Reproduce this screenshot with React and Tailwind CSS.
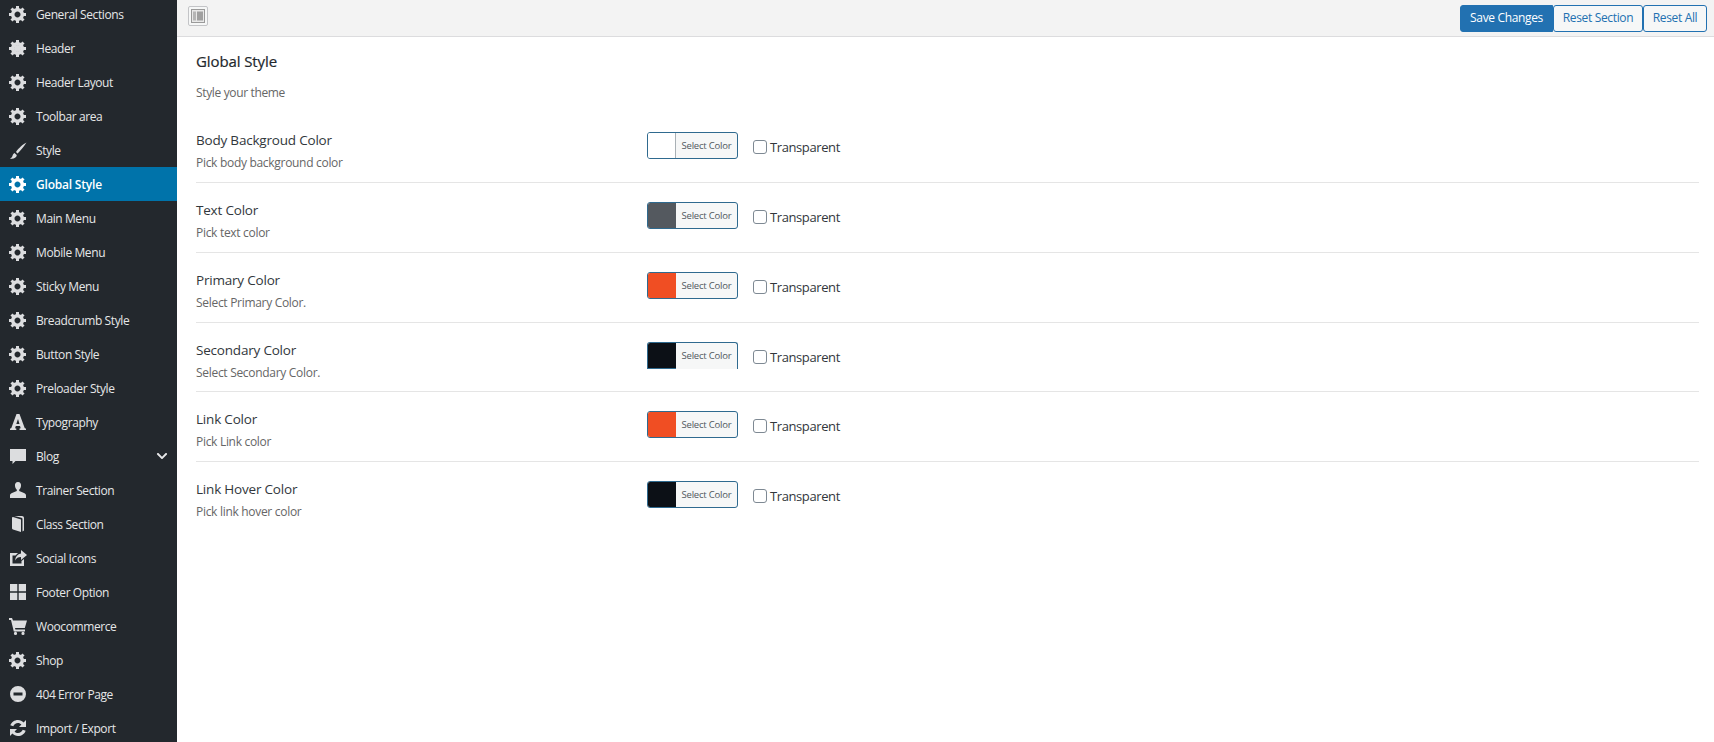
import React from 'react';
import { FaChevronDown } from 'react-icons/fa';

const Gear = ({ solid }) => (
  <svg viewBox="0 0 20 20" className="w-5 h-5 fill-current">
    <path d="M18 12h-2.18c-.17.7-.44 1.35-.81 1.93l1.54 1.54-2.1 2.1-1.54-1.54c-.58.36-1.23.63-1.91.79V19H8v-2.18c-.68-.16-1.33-.43-1.91-.79l-1.54 1.54-2.12-2.12 1.54-1.54c-.36-.58-.63-1.23-.79-1.91H1V9.03h2.17c.16-.7.44-1.35.8-1.94L2.43 5.55l2.1-2.1 1.54 1.54c.58-.37 1.24-.64 1.93-.81V2h3v2.18c.68.16 1.33.43 1.91.79l1.54-1.54 2.12 2.12-1.54 1.54c.36.59.64 1.24.8 1.94H18V12zm-8.5 1.5c1.66 0 3-1.34 3-3s-1.34-3-3-3-3 1.34-3 3 1.34 3 3 3z" />
    {solid && <circle cx="9.5" cy="10.5" r="3.5" />}
  </svg>
);

const Icon = ({ d }) => (
  <svg viewBox="0 0 20 20" className="w-5 h-5 fill-current">
    <path fillRule="evenodd" d={d} />
  </svg>
);

const icons = {
  brush: 'M18.5 2.5c-3 1.5-8 5.5-10.500 9.500l1.500 1.500c3.500-3 7.500-8.500 9-11zM6.500 13c-1.500 1-2 2.500-2.500 4L2 19c2.500-.2 5-.8 6.200-2.300.5-.7.6-1.200.5-1.700z',
  type: 'M8.500 2h3l5 13.500c.2.600.6.900 1.500 1V18h-6.500v-1.500c1 0 1.200-.3 1-1l-.5-1.500H7.800l-.5 1.500c-.2.700 0 1 1 1V18H2v-1.500c.9-.1 1.300-.4 1.500-1zM8.300 12h3.200L10 7z',
  chat: 'M2 3h16v12H7.500l-3 3v-3H2z',
  user: 'M10 2c2.300 0 3.300 1.800 3 4-.2 1.700-1 3-1.800 3.800V11l4.800 2c1.300.5 2 1.500 2 2.500V18H2v-2.500c0-1 .7-2 2-2.500l4.800-2V9.800C8 9 7.200 7.700 7 6c-.3-2.200.7-4 3-4z',
  book: 'M5 3l8 2.500V18l-8-2.500c-.6-.2-1-.7-1-1.300V4c0-.7.4-1.200 1-1zM6.500 2H14c1 0 2 .8 2 2v12.500l-1.500 1V5c0-.6-.3-1-1-1.300z',
  share: 'M2 5h8L7.500 7.500h-3v8h9V13l2.500-2v7H2zM13 2l6 5-6 5V9c-3 0-4.500 1-6 3.500.5-4 2.500-6.500 6-7z',
  grid: 'M2 2h7.300v7.300H2zM10.700 2H18v7.300h-7.300zM2 10.700h7.300V18H2zM10.700 10.700H18V18h-7.300z',
  cart: 'M1 2h3l1 2.500h14L16.800 12H7l.4 1.500H17v2H5.800L3 4H1zM7.500 15.800a1.600 1.600 0 1 1 0 3.200 1.600 1.600 0 0 1 0-3.200zM15 15.800a1.600 1.600 0 1 1 0 3.200 1.600 1.600 0 0 1 0-3.200z',
  minus: 'M10 2a8 8 0 1 1 0 16 8 8 0 0 1 0-16zM5.500 8.500v3h9v-3z',
  update: 'M10 2c2.200 0 4.200.9 5.600 2.400L18 2v7h-7l2.400-2.400C12.500 5.600 11.300 5 10 5 7.800 5 6 6.300 5.300 8.200l-3-.9C3.400 4.200 6.400 2 10 2zM2 11h7l-2.400 2.400c.9 1 2.100 1.600 3.400 1.600 2.200 0 4-1.300 4.700-3.200l3 .9C16.600 15.800 13.600 18 10 18c-2.200 0-4.200-.9-5.600-2.400L2 18z',
};

const menu = [
  { label: 'General Sections', icon: <Gear /> },
  { label: 'Header', icon: <Gear solid /> },
  { label: 'Header Layout', icon: <Gear /> },
  { label: 'Toolbar area', icon: <Gear /> },
  { label: 'Style', icon: <Icon d={icons.brush} /> },
  { label: 'Global Style', icon: <Gear />, active: true },
  { label: 'Main Menu', icon: <Gear /> },
  { label: 'Mobile Menu', icon: <Gear /> },
  { label: 'Sticky Menu', icon: <Gear /> },
  { label: 'Breadcrumb Style', icon: <Gear /> },
  { label: 'Button Style', icon: <Gear /> },
  { label: 'Preloader Style', icon: <Gear /> },
  { label: 'Typography', icon: <Icon d={icons.type} /> },
  { label: 'Blog', icon: <Icon d={icons.chat} />, arrow: true },
  { label: 'Trainer Section', icon: <Icon d={icons.user} /> },
  { label: 'Class Section', icon: <Icon d={icons.book} /> },
  { label: 'Social Icons', icon: <Icon d={icons.share} /> },
  { label: 'Footer Option', icon: <Icon d={icons.grid} /> },
  { label: 'Woocommerce', icon: <Icon d={icons.cart} /> },
  { label: 'Shop', icon: <Gear /> },
  { label: '404 Error Page', icon: <Icon d={icons.minus} /> },
  { label: 'Import / Export', icon: <Icon d={icons.update} /> },
];

const rows = [
  { title: 'Body Backgroud Color', desc: 'Pick body background color', color: '#ffffff' },
  { title: 'Text Color', desc: 'Pick text color', color: '#54595f' },
  { title: 'Primary Color', desc: 'Select Primary Color.', color: '#f04e23' },
  { title: 'Secondary Color', desc: 'Select Secondary Color.', color: '#0c1016', clipped: true },
  { title: 'Link Color', desc: 'Pick Link color', color: '#f04e23' },
  { title: 'Link Hover Color', desc: 'Pick link hover color', color: '#0c1016' },
];

const Sidebar = () => (
  <aside className="w-[177px] shrink-0 h-full overflow-hidden bg-[#23282d]">
    <ul className="-mt-[3px]">
      {menu.map((item) => (
        <li
          key={item.label}
          className={`h-[34px] flex items-center pl-[8px] pr-[8px] text-[12px] ${
            item.active ? 'bg-[#0073aa] text-white font-semibold tracking-[-0.2px]' : 'text-[#e6e7e8] tracking-[-0.4px]'
          }`}
        >
          <span className={`w-[28px] shrink-0 -mt-[1px] ${item.active ? 'text-white' : 'text-[#dcdddf]'}`}>{item.icon}</span>
          <span className="flex-1 whitespace-nowrap mt-[2px]">{item.label}</span>
          {item.arrow && <FaChevronDown className="text-[12px] text-[#e6e7e8] mr-[1px]" />}
        </li>
      ))}
    </ul>
  </aside>
);

const ColorRow = ({ row, last }) => (
  <div className={`h-[69.85px] flex items-start ${last ? '' : 'border-b border-[#e5e5e5]'}`}>
    <div className="w-[451px] shrink-0 pt-[17px]">
      <h3 className="text-[13.5px] leading-[20px] font-normal tracking-[-0.2px] text-[#32373c]">{row.title}</h3>
      <p className="mt-[4px] text-[12px] leading-[18px] tracking-[-0.3px] text-[#666]">{row.desc}</p>
    </div>
    <div className="flex items-start pt-[19px]">
      <div
        className={`w-[91px] h-[27px] flex overflow-hidden rounded-[3px] border border-[#2f6a8f] bg-[#f6f7f7] ${
          row.clipped ? 'border-b-0 h-[26px] rounded-b-none' : ''
        }`}
      >
        <span
          className={`w-[28px] h-full shrink-0 ${row.color === '#ffffff' ? 'border-r border-[#a9b0b5]' : ''} ${
            row.clipped ? 'border-b border-[#2f6a8f]' : ''
          }`}
          style={{ backgroundColor: row.color }}
        />
        <span className="flex-1 text-center text-[9.5px] leading-[25px] tracking-[-0.2px] text-[#50575e]">Select Color</span>
      </div>
      <span className="ml-[15px] mt-[8px] w-[14px] h-[14px] rounded-[3px] border border-[#7e8993] bg-white" />
      <span className="ml-[2px] mt-[5px] pl-px text-[13px] leading-[20px] tracking-[-0.4px] text-[#32373c]">Transparent</span>
    </div>
  </div>
);

export default function App() {
  return (
    <div className="w-screen h-screen flex overflow-hidden bg-white font-['Open_Sans',sans-serif]">
      <Sidebar />
      <main className="flex-1 min-w-0">
        <div className="h-[37px] flex items-center justify-between pl-[11px] pr-[7px] bg-[#f3f3f3] border-b border-[#dcdcde]">
          <button className="w-[20px] h-[20px] -mt-[4px] flex items-center justify-center rounded-[2px] border border-[#c3c4c7] bg-[#f6f7f7]">
            <svg viewBox="0 0 14 14" className="w-[14px] h-[14px]">
              <rect x="0.5" y="0.5" width="13" height="13" fill="#e8e8e8" stroke="#9a9a9a" />
              <rect x="2" y="2.500" width="3" height="9" fill="#b5b5b5" />
              <rect x="6" y="2.500" width="6" height="9" fill="#a0a0a0" />
            </svg>
          </button>
          <div className="flex text-[12px] tracking-[-0.35px]">
            <button className="w-[93px] h-[27px] rounded-l-[3px] bg-[#2271b1] border border-[#2271b1] text-white">Save Changes</button>
            <button className="w-[90px] h-[27px] rounded-[3px] bg-[#f6f7f7] border border-[#2271b1] text-[#2271b1]">Reset Section</button>
            <button className="w-[64px] h-[27px] rounded-[3px] bg-[#f6f7f7] border border-[#2271b1] text-[#2271b1]">Reset All</button>
          </div>
        </div>
        <section className="pl-[19px] pr-[15px]">
          <h2 className="mt-[14px] text-[15px] leading-[20px] font-medium tracking-[-0.1px] text-[#23282d] [-webkit-text-stroke:0.2px]">Global Style</h2>
          <p className="mt-[12px] text-[12px] leading-[20px] tracking-[-0.35px] text-[#666]">Style your theme</p>
          <div className="mt-[10px]">
            {rows.map((row, i) => (
              <ColorRow key={row.title} row={row} last={i === rows.length - 1} />
            ))}
          </div>
        </section>
      </main>
    </div>
  );
}
